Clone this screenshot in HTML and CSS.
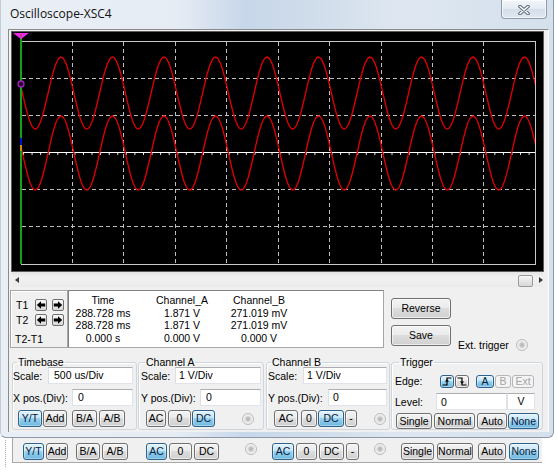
FILE: index.html
```html
<!DOCTYPE html>
<html>
<head>
<meta charset="utf-8">
<title>Oscilloscope-XSC4</title>
<link rel="stylesheet" href="styles.css">
</head>
<body>
<div class="window">
  <div class="titlebar">
    <span class="title">Oscilloscope-XSC4</span>
    <div class="close">
      <svg width="14" height="10" viewBox="0 0 14 10"><path d="M3 1.5L11 8.5M11 1.5L3 8.5" stroke="#5d6a7a" stroke-width="3.6" stroke-linecap="round"/><path d="M3 1.5L11 8.5M11 1.5L3 8.5" stroke="#fff" stroke-width="1.6" stroke-linecap="round"/></svg>
    </div>
  </div>
  <div class="client">
    <div class="screen">
      <svg class="scope" width="531" height="239" viewBox="0 0 531 239">
        <defs><clipPath id="plot"><rect x="9" y="0" width="514" height="239"/></clipPath></defs>
        <g stroke="#bdbdbd" stroke-width="1" stroke-dasharray="4 3" fill="none">
          <path d="M60.5 10V232M111.5 10V232M163.5 10V232M214.5 10V232M266.5 10V232M317.5 10V232M369.5 10V232M420.5 10V232M471.5 10V232"/>
          <path d="M10 46.5H523M10 83.5H523M10 157.5H523M10 194.5H523"/>
        </g>
        <rect x="9.5" y="9.5" width="514" height="223" fill="none" stroke="#c8c8c8"/>
        <path d="M9 120.5H523" stroke="#ffffff"/>
        <path d="M11 122H523" stroke="#e8e8e8" stroke-width="2" stroke-dasharray="1 7.57"/>
        <g clip-path="url(#plot)" fill="none" stroke="#e00000" stroke-width="1.3">
          <path d="M-2.5 25c9.37 0 16.38 72 25.75 72s16.38-72 25.75-72s16.38 72 25.75 72s16.38-72 25.75-72s16.38 72 25.75 72s16.38-72 25.75-72s16.38 72 25.75 72s16.38-72 25.75-72s16.38 72 25.75 72s16.38-72 25.75-72s16.38 72 25.75 72s16.38-72 25.75-72s16.38 72 25.75 72s16.38-72 25.75-72s16.38 72 25.75 72s16.38-72 25.75-72s16.38 72 25.75 72s16.38-72 25.75-72s16.38 72 25.75 72s16.38-72 25.75-72s16.38 72 25.75 72"/>
          <path d="M-2.5 84c9.37 0 16.38 74 25.75 74s16.38-74 25.75-74s16.38 74 25.75 74s16.38-74 25.75-74s16.38 74 25.75 74s16.38-74 25.75-74s16.38 74 25.75 74s16.38-74 25.75-74s16.38 74 25.75 74s16.38-74 25.75-74s16.38 74 25.75 74s16.38-74 25.75-74s16.38 74 25.75 74s16.38-74 25.75-74s16.38 74 25.75 74s16.38-74 25.75-74s16.38 74 25.75 74s16.38-74 25.75-74s16.38 74 25.75 74s16.38-74 25.75-74s16.38 74 25.75 74"/>
        </g>
        <path d="M9 5V232" stroke="#16a016" stroke-width="2"/>
        <path d="M9 106V113" stroke="#0010d0" stroke-width="2"/>
        <path d="M9 113V119" stroke="#c89000" stroke-width="2"/>
        <polygon points="1,1 17,1 9,7" fill="#f028f0"/>
        <path d="M9 2V5" stroke="#806000" stroke-width="1"/>
        <circle cx="9" cy="52" r="3" fill="#280028" stroke="#a020c0" stroke-width="1.3"/>
      </svg>
    </div>
    <div class="hscroll">
      <span class="sarrow left"></span>
      <span class="thumb"></span>
      <span class="sarrow right"></span>
    </div>
    <div class="readrow">
      <div class="tbox">
        <div class="trow t1">
          <span class="tlabel">T1</span>
          <span class="ab"><svg width="10" height="10" viewBox="0 0 10 10"><path d="M0.8 5L5 1.2V3.6H9.2V6.4H5V8.8Z" fill="#000"/></svg></span>
          <span class="ab m5"><svg width="10" height="10" viewBox="0 0 10 10"><path d="M9.2 5L5 1.2V3.6H0.8V6.4H5V8.8Z" fill="#000"/></svg></span>
        </div>
        <div class="trow t2">
          <span class="tlabel">T2</span>
          <span class="ab"><svg width="10" height="10" viewBox="0 0 10 10"><path d="M0.8 5L5 1.2V3.6H9.2V6.4H5V8.8Z" fill="#000"/></svg></span>
          <span class="ab m5"><svg width="10" height="10" viewBox="0 0 10 10"><path d="M9.2 5L5 1.2V3.6H0.8V6.4H5V8.8Z" fill="#000"/></svg></span>
        </div>
        <div class="trow t3">
          <span class="tlabel diff">T2-T1</span>
        </div>
      </div>
      <div class="readout">
        <span>Time</span><span>Channel_A</span><span>Channel_B</span>
        <span>288.728 ms</span><span>1.871 V</span><span>271.019 mV</span>
        <span>288.728 ms</span><span>1.871 V</span><span>271.019 mV</span>
        <span class="last">0.000 s</span><span class="last">0.000 V</span><span class="last">0.000 V</span>
      </div>
      <div class="actions">
        <span class="b big">Reverse</span>
        <span class="b big">Save</span>
      </div>
      <div class="ext">Ext. trigger <span class="radio m7"></span></div>
    </div>
    <div class="groups">
      <fieldset class="fs fs-tb">
        <legend class="lg-tb">Timebase</legend>
        <div class="fr r1"><span class="lbl">Scale:</span><span class="inp w85">500 us/Div</span></div>
        <div class="fr r2"><span class="lbl">X pos.(Div):</span><span class="inp w61">0</span></div>
        <div class="fr r3">
          <span class="b on w24 m5">Y/T</span><span class="b w24 m1">Add</span><span class="b w25 m5">B/A</span><span class="b w26 m2">A/B</span>
        </div>
      </fieldset>
      <fieldset class="fs fs-a m1">
        <legend class="lg-a">Channel A</legend>
        <div class="fr r1"><span class="lbl m2">Scale:</span><span class="inp w86 p3">1 V/Div</span></div>
        <div class="fr r2"><span class="lbl m2">Y pos.(Div):</span><span class="inp w61">0</span></div>
        <div class="fr r3">
          <span class="b w20 m7">AC</span><span class="b w23 m2">0</span><span class="b on w23 m1">DC</span><span class="radio m27"></span>
        </div>
      </fieldset>
      <fieldset class="fs fs-b m2">
        <legend class="lg-b">Channel B</legend>
        <div class="fr r1"><span class="lbl m1">Scale:</span><span class="inp w84 p3">1 V/Div</span></div>
        <div class="fr r2"><span class="lbl m1">Y pos.(Div):</span><span class="inp w59 p4">0</span></div>
        <div class="fr r3">
          <span class="b w24 m7">AC</span><span class="b w16 m3">0</span><span class="b on w26 m1">DC</span><span class="b w12 m1">-</span><span class="radio m17"></span>
        </div>
      </fieldset>
      <fieldset class="fs fs-t m1">
        <legend class="lg-t">Trigger</legend>
        <div class="fr tr1">
          <span class="lbl m3 w45">Edge:</span>
          <span class="b on sm w14"><svg width="10" height="9" viewBox="0 0 10 9"><path d="M0.5 8H5V1H9.5" fill="none" stroke="#000" stroke-width="1.2"/><path d="M2.8 4.6L5 2.2L7.2 4.6Z" fill="#000"/></svg></span>
          <span class="b sm w14 m1"><svg width="10" height="9" viewBox="0 0 10 9"><path d="M0.5 1H5V8H9.5" fill="none" stroke="#000" stroke-width="1.2"/><path d="M2.8 4.4L5 6.8L7.2 4.4Z" fill="#000"/></svg></span>
          <span class="b on sm w18 m7">A</span><span class="b off sm w16 m1">B</span><span class="b off sm w22 m1">Ext</span>
        </div>
        <div class="fr tr2">
          <span class="lbl m3 w41">Level:</span>
          <span class="inp w71 p4 low">0</span><span class="inp w28 ctr m1">V</span>
        </div>
        <div class="fr tr3">
          <span class="b h16 w36 m4">Single</span><span class="b h16 w41 m2">Normal</span><span class="b h16 w30 m2">Auto</span><span class="b on h16 w31 m1">None</span>
        </div>
      </fieldset>
    </div>
  </div>
</div>
<div class="ghostwrap">
  <span class="dots"></span>
  <div class="ghost">
    <span class="b on w21 m10">Y/T</span><span class="b w22 m2">Add</span><span class="b w24 m8">B/A</span><span class="b w26 m2">A/B</span>
    <span class="b on w21 m18">AC</span><span class="b w23 m2">0</span><span class="b w25 m2">DC</span><span class="radio m26"></span>
    <span class="b on w22 m15">AC</span><span class="b w21 m2">0</span><span class="b w25 m2">DC</span><span class="b w13 m2">-</span><span class="radio m15"></span>
    <span class="b w33 m15">Single</span><span class="b w36 m3">Normal</span><span class="b w28 m5">Auto</span><span class="b on w30 m3">None</span>
  </div>
</div>
</body>
</html>
```

FILE: styles.css
```css
* { box-sizing: border-box; }
html, body { margin: 0; padding: 0; }
body {
  width: 558px;
  height: 472px;
  overflow: hidden;
  background: #ffffff;
  font-family: "Liberation Sans", Arial, sans-serif;
  font-size: 10.5px;
  color: #000;
}

/* window frame */
.window {
  width: 554px;
  height: 438px;
  border: 1px solid #8c99a8;
  border-top: none;
  border-left-color: #c3ccd7;
  border-radius: 0 0 6px 6px;
  background: linear-gradient(90deg, #eaeff6 0%, #e6ecf4 32%, #c7d7ea 44%, #cfdcea 56%, #dee7f1 72%, #d5e0ed 100%);
}
.titlebar {
  height: 29px;
  display: flex;
  align-items: flex-start;
}
.title {
  margin: 6px 0 0 9px;
  font-family: "Open Sans", "Noto Sans", sans-serif;
  font-size: 12px;
  line-height: 16px;
  color: #111;
}
.close {
  margin-left: auto;
  margin-right: 6px;
  width: 46px;
  height: 19px;
  border: 1px solid #8d9aab;
  border-top: none;
  border-radius: 0 0 4px 4px;
  background: linear-gradient(#f3f6fa, #e3eaf2 50%, #d5dfea 51%, #dfe7f0);
  display: flex;
  align-items: center;
  justify-content: center;
  box-shadow: inset 0 0 0 1px rgba(255,255,255,0.7);
}
.close svg { display: block; margin-top: 1px; }

.client {
  margin-left: 7px;
  width: 541px;
  height: 403px;
  background: #f0f0f0;
  border-left: 1px solid #8b8b8b;
  border-top: 1px solid #8b8b8b;
  border-right: 1px solid #ffffff;
  display: flex;
  flex-direction: column;
}

/* scope screen */
.screen {
  margin: 1px 0 0 2px;
  width: 533px;
  height: 241px;
  border: 1px solid #5c5c5c;
  background: #000;
  flex: none;
}
.scope { display: block; }

.hscroll {
  margin-left: 3px;
  width: 531px;
  height: 15px;
  flex: none;
  display: flex;
  align-items: center;
  background: linear-gradient(#e4e4e4, #f1f1f1 35%, #ebebeb);
}
.sarrow { width: 0; height: 0; border-top: 3.5px solid transparent; border-bottom: 3.5px solid transparent; }
.sarrow.left { margin-left: 3px; border-right: 4px solid #3a3a3a; }
.sarrow.right { margin-left: 6px; border-left: 4px solid #3a3a3a; }
.thumb {
  margin-left: auto;
  margin-top: 2px;
  width: 15px;
  height: 12px;
  border: 1px solid #9a9a9a;
  border-radius: 2px;
  background: linear-gradient(#f7f7f7, #e6e6e6 50%, #d8d8d8);
}

/* readout row */
.readrow {
  display: flex;
  margin-top: 3px;
  height: 58px;
  flex: none;
}
.tbox {
  margin-left: 1px;
  width: 58px;
  height: 58px;
  border: 1px solid #a6a6a6;
  box-shadow: inset 1px 1px 0 #ffffff;
  padding-top: 8px;
}
.trow { display: flex; align-items: center; height: 12px; }
.trow.t2 { margin-top: 3px; }
.trow.t3 { margin-top: 7px; }
.tlabel { margin-left: 5px; width: 19px; flex: none; }
.tlabel.diff { margin-left: 4px; width: auto; }
.ab {
  width: 12px;
  height: 12px;
  flex: none;
  border: 1px solid #707070;
  border-radius: 2px;
  background: linear-gradient(#f7f7f7, #e9e9e9 50%, #d6d6d6);
  display: flex;
  align-items: center;
  justify-content: center;
}
.ab svg { display: block; }

.readout {
  width: 316px;
  height: 58px;
  border: 1px solid #a6a6a6;
  border-top-color: #828282;
  border-left-color: #828282;
  background: #fff;
  padding-top: 3px;
  display: grid;
  grid-template-columns: 68px 90px 64px;
  grid-auto-rows: 12.5px;
  text-align: center;
  font-size: 10.5px;
  line-height: 12.5px;
}
.readout span { white-space: nowrap; }

.actions {
  margin-left: 7px;
  width: 60px;
  padding-top: 8px;
  display: flex;
  flex-direction: column;
  gap: 6px;
}
.ext {
  margin-left: 7px;
  margin-top: 48px;
  height: 14px;
  display: flex;
  align-items: center;
  white-space: nowrap;
}

/* buttons */
.b {
  height: 17px;
  flex: none;
  border: 1px solid #707070;
  border-radius: 3px;
  background: linear-gradient(#f3f3f3, #ebebeb 45%, #dddddd 50%, #d0d0d0);
  box-shadow: inset 0 0 0 1px rgba(255,255,255,0.6);
  display: flex;
  align-items: center;
  justify-content: center;
  line-height: 15px;
  white-space: nowrap;
}
.b.on {
  border-color: #2c628b;
  background: linear-gradient(#e5f4fc, #c4e5f6 45%, #98d1ef 50%, #6db7de);
  box-shadow: inset 0 0 0 1px rgba(255,255,255,0.35);
  color: #0a1a3a;
}
.b.off {
  color: #a6a6a6;
  border-color: #b3b7ba;
  background: #f4f4f4;
  box-shadow: none;
}
.b.big { width: 60px; height: 21px; }
.b.sm { height: 13px; line-height: 11px; }
.b.h16 { height: 16px; }
.b svg { display: block; }

.radio {
  width: 12px;
  height: 12px;
  flex: none;
  border-radius: 50%;
  border: 1px solid #b9b9b9;
  background: radial-gradient(circle, #b4b4b4 0, #c4c4c4 2px, #e4e4e4 3px, #f5f5f5 5px);
}

/* group boxes */
.groups {
  display: flex;
  margin: 8px 0 0 3px;
  flex: none;
}
.fs {
  margin: 0;
  padding: 0;
  height: 74px;
  min-width: 0;
  border: 1px solid #cdd6dd;
  border-radius: 3px;
  box-shadow: inset 1px 1px 0 #ffffff;
  flex: none;
}
.fs legend {
  padding: 0 1px;
  font-size: 10.5px;
  line-height: 12px;
}
.fs-tb { width: 125px; padding-right: 3px; }
.fs-a { width: 126px; padding-right: 2px; }
.fs-b { width: 124px; padding-right: 2px; }
.fs-t { width: 152px; }
.lg-tb { margin-left: 4px; }
.lg-a { margin-left: 6px; }
.lg-b { margin-left: 4px; }
.lg-t { margin-left: 7px; }

.fr { display: flex; align-items: center; height: 17px; }
.fr.r1 { margin-top: -1px; }
.fr.r2 { margin-top: 5px; }
.fr.r3 { margin-top: 4px; }
.fr.tr1 { margin-top: 6px; height: 14px; }
.fr.tr2 { margin-top: 5px; height: 17px; }
.fr.tr3 { margin-top: 3px; height: 16px; }
.lbl { white-space: nowrap; flex: none; }

.inp {
  height: 17px;
  flex: none;
  margin-left: auto;
  background: #fff;
  border: 1px solid #e2e3ea;
  border-top-color: #abadb3;
  border-left-color: #dbdfe6;
  padding-left: 5px;
  line-height: 15px;
  white-space: nowrap;
}
.fs-t .inp { margin-left: 0; }
.inp.p3 { padding-left: 3px; }
.inp.p4 { padding-left: 4px; }
.inp.ctr { padding-left: 0; text-align: center; }
.inp.low { line-height: 17px; }

/* ghost strip under the window */
.ghostwrap {
  display: flex;
  height: 34px;
}
.dots {
  margin: 2px 0 0 5px;
  width: 1px;
  height: 27px;
  border-left: 1px dotted #b0b0b0;
  flex: none;
}
.ghost {
  margin-left: 6px;
  width: 530px;
  height: 25px;
  border-left: 1px solid #a8a8a8;
  border-bottom: 1px solid #a8a8a8;
  background: #f0f0f0;
  display: flex;
  align-items: flex-start;
  padding-top: 5px;
}

/* sizes */
.w12 { width: 12px; } .w13 { width: 13px; } .w14 { width: 14px; } .w16 { width: 16px; }
.w18 { width: 18px; } .w20 { width: 20px; } .w21 { width: 21px; } .w22 { width: 22px; }
.w23 { width: 23px; } .w24 { width: 24px; } .w25 { width: 25px; } .w26 { width: 26px; }
.w28 { width: 28px; } .w30 { width: 30px; } .w31 { width: 31px; } .w33 { width: 33px; }
.w36 { width: 36px; } .w41 { width: 41px; } .w45 { width: 45px; } .w59 { width: 59px; }
.w61 { width: 61px; } .w71 { width: 71px; } .w84 { width: 84px; } .w85 { width: 85px; }
.w86 { width: 86px; }
.m1 { margin-left: 1px; } .m2 { margin-left: 2px; } .m3 { margin-left: 3px; }
.m4 { margin-left: 4px; } .m5 { margin-left: 5px; } .m7 { margin-left: 7px; }
.m8 { margin-left: 8px; } .m10 { margin-left: 10px; } .m15 { margin-left: 15px; }
.m17 { margin-left: 17px; } .m18 { margin-left: 18px; } .m26 { margin-left: 26px; }
.m27 { margin-left: 27px; }
```
